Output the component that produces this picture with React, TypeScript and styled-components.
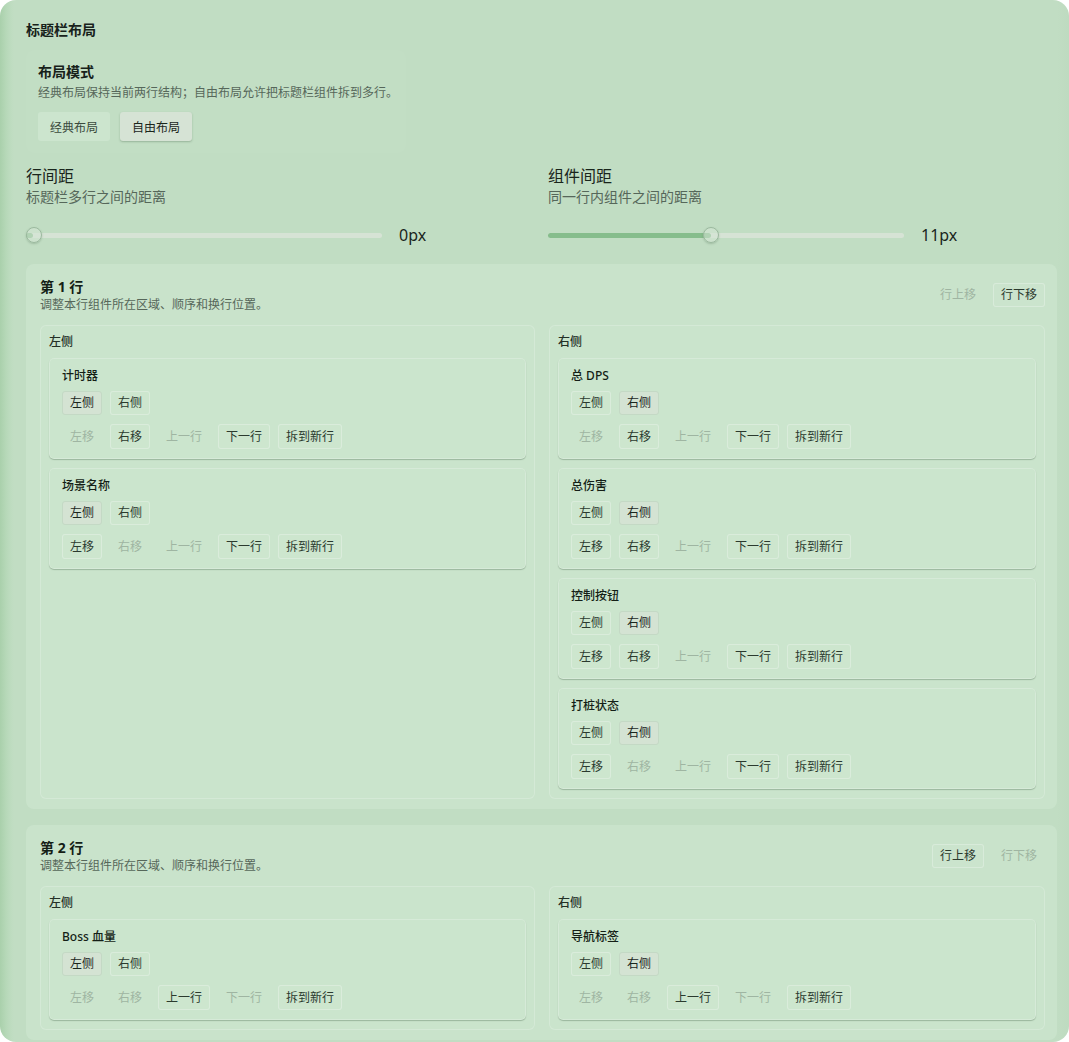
import React from "react";
import styled, { createGlobalStyle, css } from "styled-components";

const GlobalStyle = createGlobalStyle`
  html, body { margin: 0; padding: 0; background: #ffffff; }
  body {
    font-family: "Noto Sans", "Noto Sans CJK SC", sans-serif;
    color: #1c271e;
    -webkit-font-smoothing: antialiased;
  }
  * { box-sizing: border-box; }
`;

const Shell = styled.div`
  width: 1069px;
  height: 1042px;
  overflow: hidden;
  border-radius: 16px;
  padding: 20px 12px 0 26px;
  background: linear-gradient(
    to right,
    #a9d0ab 0px,
    #b6d8b8 6px,
    #bedcc0 11px,
    #c1ddc3 14px,
    #c1ddc3 calc(100% - 12px),
    #bedbc0 100%
  );
`;

const SectionTitle = styled.h2`
  margin: 0;
  font-size: 14px;
  line-height: 20px;
  font-weight: 700;
  color: #17211a;
`;

const ModeBlock = styled.div`
  margin-top: 10px;
  padding: 12px;
  width: 380px;
  border-radius: 8px;
  background: rgba(255, 255, 255, 0.03);
`;

const BlockTitle = styled.div`
  font-size: 14px;
  line-height: 20px;
  font-weight: 600;
  color: #17211a;
`;

const BlockDesc = styled.div`
  margin-top: 2px;
  font-size: 12px;
  line-height: 18px;
  color: #56675a;
  white-space: nowrap;
`;

const ModeRow = styled.div`
  display: flex;
  gap: 10px;
  margin-top: 10px;
`;

const ModeButton = styled.button<{ $active?: boolean }>`
  height: 29px;
  padding: 0 12px;
  border: none;
  border-radius: 3px;
  font-family: inherit;
  font-size: 12px;
  cursor: pointer;
  ${(p) =>
    p.$active
      ? css`
          background: #d6e3d5;
          color: #1a251c;
          box-shadow: 0 1px 2px rgba(70, 100, 72, 0.35);
        `
      : css`
          background: #cce5ce;
          color: #3a4a3d;
        `}
`;

const SliderGrid = styled.div`
  display: grid;
  grid-template-columns: 509px 509px;
  column-gap: 13px;
  margin-top: 12px;
`;

const SliderTitle = styled.div`
  font-size: 16px;
  line-height: 22px;
  color: #1a251c;
`;

const SliderDesc = styled.div`
  font-size: 14px;
  line-height: 20px;
  color: #56675a;
`;

const SliderRow = styled.div`
  display: flex;
  align-items: center;
  gap: 17px;
  height: 22px;
  margin-top: 17px;
`;

const Track = styled.div`
  position: relative;
  width: 356px;
  height: 5px;
  border-radius: 3px;
  background: #d6e3d5;
`;

const Fill = styled.div`
  position: absolute;
  left: 0;
  top: 0;
  bottom: 0;
  border-radius: 3px;
  background: #86bd8c;
`;

const Thumb = styled.div`
  position: absolute;
  top: 50%;
  width: 16px;
  height: 16px;
  margin-left: -8px;
  margin-top: -8px;
  border-radius: 50%;
  border: 1.5px solid #9bb99e;
  background: rgba(214, 230, 214, 0.55);
  box-shadow: 0 1px 2px rgba(60, 90, 62, 0.25);
`;

const SliderValue = styled.div`
  font-size: 16px;
  line-height: 22px;
  color: #1a251c;
`;

const RowCard = styled.section<{ $first?: boolean }>`
  margin-top: ${(p) => (p.$first ? "18px" : "16px")};
  width: 1031px;
  padding: 13px 12px 10px 14px;
  border-radius: 8px;
  background: #c9e3cb;
`;

const RowHeader = styled.div`
  display: flex;
  align-items: center;
  justify-content: space-between;
`;

const RowTitle = styled.div`
  font-size: 14px;
  line-height: 20px;
  font-weight: 700;
  color: #141e16;
`;

const RowDesc = styled.div`
  font-size: 12px;
  line-height: 16px;
  color: #56675a;
`;

const HeaderActions = styled.div`
  display: flex;
  gap: 9px;
`;

const Columns = styled.div`
  display: grid;
  grid-template-columns: 495px 496px;
  column-gap: 14px;
  margin-top: 12px;
`;

const Panel = styled.div`
  padding: 8px 8px 9px;
  border-radius: 6px;
  background: #cae4cc;
  border: 1px solid rgba(255, 255, 255, 0.2);
`;

const PanelLabel = styled.div`
  font-size: 12px;
  line-height: 16px;
  font-weight: 500;
  color: #243026;
`;

const ItemList = styled.div`
  display: flex;
  flex-direction: column;
  gap: 9px;
  margin-top: 8px;
`;

const ItemCard = styled.div`
  padding: 9px 12px 9px;
  border-radius: 5px;
  background: #cbe5cd;
  border: 1px solid rgba(255, 255, 255, 0.22);
  box-shadow: 0 1px 1px rgba(70, 100, 72, 0.35);
`;

const ItemTitle = styled.div`
  font-size: 12px;
  line-height: 16px;
  font-weight: 500;
  color: #141e16;
`;

const ButtonRow = styled.div<{ $gapTop: number; $h: number }>`
  display: flex;
  gap: 8px;
  height: ${(p) => p.$h}px;
  margin-top: ${(p) => p.$gapTop}px;
`;

type Variant = "selected" | "normal" | "disabled";

const SmallButton = styled.button<{ $variant: Variant }>`
  height: 100%;
  min-height: 24px;
  padding: 0 7px;
  border-radius: 3px;
  font-family: inherit;
  font-size: 12px;
  line-height: 16px;
  white-space: nowrap;
  ${(p) =>
    p.$variant === "selected"
      ? css`
          background: #d4e3d3;
          border: 1px solid #c4d9c5;
          color: #1b261d;
        `
      : p.$variant === "normal"
      ? css`
          background: rgba(255, 255, 255, 0.04);
          border: 1px solid rgba(255, 255, 255, 0.26);
          color: #2b3a2e;
        `
      : css`
          background: transparent;
          border: 1px solid transparent;
          color: #9fb5a2;
        `}
`;

const HeaderButton = styled(SmallButton)`
  height: 24px;
`;

type Side = "left" | "right";
type Item = {
  name: string;
  side: Side;
  actions: [boolean, boolean, boolean, boolean, boolean];
};
type Row = {
  title: string;
  up: boolean;
  down: boolean;
  left: Item[];
  right: Item[];
};

const ACTION_LABELS = ["左移", "右移", "上一行", "下一行", "拆到新行"];

const rows: Row[] = [
  {
    title: "第 1 行",
    up: false,
    down: true,
    left: [
      { name: "计时器", side: "left", actions: [false, true, false, true, true] },
      { name: "场景名称", side: "left", actions: [true, false, false, true, true] },
    ],
    right: [
      { name: "总 DPS", side: "right", actions: [false, true, false, true, true] },
      { name: "总伤害", side: "right", actions: [true, true, false, true, true] },
      { name: "控制按钮", side: "right", actions: [true, true, false, true, true] },
      { name: "打桩状态", side: "right", actions: [true, false, false, true, true] },
    ],
  },
  {
    title: "第 2 行",
    up: true,
    down: false,
    left: [
      { name: "Boss 血量", side: "left", actions: [false, false, true, false, true] },
    ],
    right: [
      { name: "导航标签", side: "right", actions: [false, false, true, false, true] },
    ],
  },
];

function ItemBox({ item }: { item: Item }) {
  return (
    <ItemCard>
      <ItemTitle>{item.name}</ItemTitle>
      <ButtonRow $gapTop={7} $h={24}>
        <SmallButton $variant={item.side === "left" ? "selected" : "normal"}>左侧</SmallButton>
        <SmallButton $variant={item.side === "right" ? "selected" : "normal"}>右侧</SmallButton>
      </ButtonRow>
      <ButtonRow $gapTop={9} $h={25}>
        {ACTION_LABELS.map((label, i) => (
          <SmallButton key={label} $variant={item.actions[i] ? "normal" : "disabled"}>
            {label}
          </SmallButton>
        ))}
      </ButtonRow>
    </ItemCard>
  );
}

function Slider({
  title,
  desc,
  value,
  max,
}: {
  title: string;
  desc: string;
  value: number;
  max: number;
}) {
  const pct = (value / max) * 100;
  return (
    <div>
      <SliderTitle>{title}</SliderTitle>
      <SliderDesc>{desc}</SliderDesc>
      <SliderRow>
        <Track>
          <Fill style={{ width: `${Math.max(pct, 2)}%` }} />
          <Thumb style={{ left: `calc(${pct}% + ${pct === 0 ? 8 : 0}px)` }} />
        </Track>
        <SliderValue>{value}px</SliderValue>
      </SliderRow>
    </div>
  );
}

export default function App() {
  return (
    <>
      <GlobalStyle />
      <Shell>
        <SectionTitle>标题栏布局</SectionTitle>
        <ModeBlock>
          <BlockTitle>布局模式</BlockTitle>
          <BlockDesc>经典布局保持当前两行结构；自由布局允许把标题栏组件拆到多行。</BlockDesc>
          <ModeRow>
            <ModeButton>经典布局</ModeButton>
            <ModeButton $active>自由布局</ModeButton>
          </ModeRow>
        </ModeBlock>
        <SliderGrid>
          <Slider title="行间距" desc="标题栏多行之间的距离" value={0} max={24} />
          <Slider title="组件间距" desc="同一行内组件之间的距离" value={11} max={24} />
        </SliderGrid>
        {rows.map((row, idx) => (
          <RowCard key={row.title} $first={idx === 0}>
            <RowHeader>
              <div>
                <RowTitle>{row.title}</RowTitle>
                <RowDesc>调整本行组件所在区域、顺序和换行位置。</RowDesc>
              </div>
              <HeaderActions>
                <HeaderButton $variant={row.up ? "normal" : "disabled"}>行上移</HeaderButton>
                <HeaderButton $variant={row.down ? "normal" : "disabled"}>行下移</HeaderButton>
              </HeaderActions>
            </RowHeader>
            <Columns>
              <Panel>
                <PanelLabel>左侧</PanelLabel>
                <ItemList>
                  {row.left.map((it) => (
                    <ItemBox key={it.name} item={it} />
                  ))}
                </ItemList>
              </Panel>
              <Panel>
                <PanelLabel>右侧</PanelLabel>
                <ItemList>
                  {row.right.map((it) => (
                    <ItemBox key={it.name} item={it} />
                  ))}
                </ItemList>
              </Panel>
            </Columns>
          </RowCard>
        ))}
      </Shell>
    </>
  );
}
